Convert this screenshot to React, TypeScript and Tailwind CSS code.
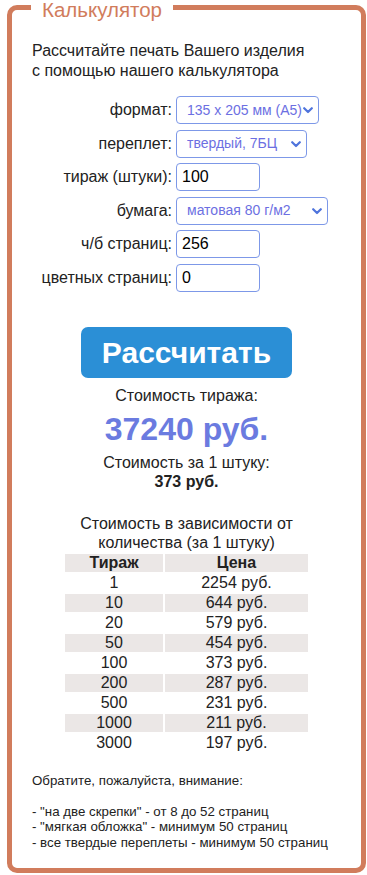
import React from "react";

const rows: [string, string][] = [
  ["1", "2254 руб."],
  ["10", "644 руб."],
  ["20", "579 руб."],
  ["50", "454 руб."],
  ["100", "373 руб."],
  ["200", "287 руб."],
  ["500", "231 руб."],
  ["1000", "211 руб."],
  ["3000", "197 руб."],
];

function Chevron() {
  return (
    <svg width="10" height="7" viewBox="0 0 10 7" className="pointer-events-none absolute right-[6px] top-[11px]">
      <path d="M1.2 1.2 L5 5 L8.8 1.2" fill="none" stroke="#4f74dc" strokeWidth="2.2" strokeLinecap="round" strokeLinejoin="round" />
    </svg>
  );
}

function Sel({ w, value }: { w: string; value: string }) {
  return (
    <div className={`relative h-[28px] ${w}`}>
      <select
        defaultValue={value}
        className="h-[28px] w-full appearance-none rounded-[4px] border border-[#7d98e8] bg-white pl-[10px] text-[14px] text-[#6c6fe2] outline-none"
      >
        <option value={value}>{value}</option>
      </select>
      <Chevron />
    </div>
  );
}

function Inp({ value }: { value: string }) {
  return (
    <input
      defaultValue={value}
      className="h-[28px] w-[84px] rounded-[4px] border border-[#7d98e8] bg-white px-[5px] text-[16px] text-black outline-none"
    />
  );
}

function Row({ label, children }: { label: string; children: React.ReactNode }) {
  return (
    <div className="flex h-[28px] items-center">
      <span className="w-[140px] text-right text-[16px] leading-[18px]">{label}</span>
      <div className="ml-[4px]">{children}</div>
    </div>
  );
}

export default function App() {
  return (
    <div className="w-[367px] bg-white pl-[7px] pt-[5px] font-['Liberation_Sans',Arial,sans-serif] text-[#222]">
      <div className="relative w-[359px] rounded-[10px] border-[5px] border-[#d17c5c] px-[20px] pb-[18px] pt-[31px]">
        <span className="absolute left-[19px] top-[-9px] bg-white px-[11px] text-[20.5px] leading-[18px] text-[#d17c5c]">
          Калькулятор
        </span>
        <p className="text-[16px] leading-[20px]">
          Рассчитайте печать Вашего изделия
          <br />с помощью нашего калькулятора
        </p>
        <div className="mt-[15px] flex flex-col gap-[5.6px]">
          <Row label="формат:">
            <Sel w="w-[143px]" value="135 x 205 мм (А5)" />
          </Row>
          <Row label="переплет:">
            <Sel w="w-[131px]" value="твердый, 7БЦ" />
          </Row>
          <Row label="тираж (штуки):">
            <Inp value="100" />
          </Row>
          <Row label="бумага:">
            <Sel w="w-[152px]" value="матовая 80 г/м2" />
          </Row>
          <Row label="ч/б страниц:">
            <Inp value="256" />
          </Row>
          <Row label="цветных страниц:">
            <Inp value="0" />
          </Row>
        </div>
        <button className="mx-auto mt-[35px] flex h-[51px] w-[211px] items-center justify-center rounded-[7px] bg-[#2b8fd6] text-[30px] font-bold text-white">
          Рассчитать
        </button>
        <div className="text-center">
          <p className="mt-[9px] text-[16px] leading-[18px]">Стоимость тиража:</p>
          <p className="mt-[6px] text-[32px] font-bold leading-[36px] text-[#6b7be0]">37240 руб.</p>
          <p className="mt-[6px] text-[16px] leading-[19px]">
            Стоимость за 1 штуку:
            <br />
            <b>373 руб.</b>
          </p>
          <p className="mt-[23px] text-[16px] leading-[19px]">
            Стоимость в зависимости от
            <br />
            количества (за 1 штуку)
          </p>
        </div>
        <table className="mx-auto border-separate border-spacing-[2px] text-center text-[16px] leading-[18px]">
          <thead>
            <tr>
              <th className="h-[18px] w-[98px] bg-[#ebe7e6] p-0 font-bold">Тираж</th>
              <th className="h-[18px] w-[143px] bg-[#ebe7e6] p-0 font-bold">Цена</th>
            </tr>
          </thead>
          <tbody>
            {rows.map(([q, p], i) => (
              <tr key={q}>
                <td className={`h-[18px] p-0 ${i % 2 === 1 ? "bg-[#ebe7e6]" : ""}`}>{q}</td>
                <td className={`h-[18px] p-0 ${i % 2 === 1 ? "bg-[#ebe7e6]" : ""}`}>{p}</td>
              </tr>
            ))}
          </tbody>
        </table>
        <div className="mt-[19px] text-[13.3px] leading-[15.5px]">
          <p>Обратите, пожалуйста, внимание:</p>
          <p className="mt-[15.5px]">- "на две скрепки" - от 8 до 52 страниц</p>
          <p>- "мягкая обложка" - минимум 50 страниц</p>
          <p>- все твердые переплеты - минимум 50 страниц</p>
        </div>
      </div>
    </div>
  );
}
